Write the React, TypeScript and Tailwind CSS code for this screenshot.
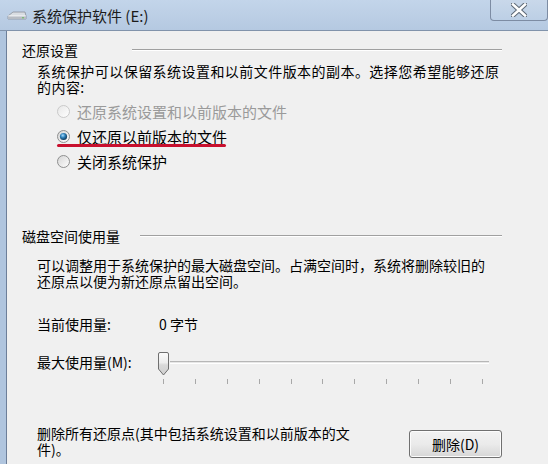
import React from "react";

const font = { fontFamily: '"Noto Sans CJK SC", "Noto Sans", sans-serif' };

const DriveIcon = () => (
  <svg width="20" height="12" viewBox="0 0 20 12">
    <path d="M1 6 L6 2 L18 2 L19 6 L19 9 L1 9 Z" fill="#d9dde2" stroke="#8a9099" strokeWidth="0.8" />
    <path d="M1 6 L19 6" stroke="#f7f8f9" strokeWidth="1" />
    <rect x="1" y="6.5" width="18" height="2.5" fill="#b7bcc3" />
    <circle cx="16" cy="7.7" r="0.8" fill="#5dbb4a" />
  </svg>
);

const CloseGlyph = () => (
  <svg width="16" height="14" viewBox="0 0 16 14">
    <path d="M2 1.5 L14 12.5 M14 1.5 L2 12.5" stroke="#5d6875" strokeWidth="4.6" strokeLinecap="square" />
    <path d="M2 1.5 L14 12.5 M14 1.5 L2 12.5" stroke="#ffffff" strokeWidth="2.6" strokeLinecap="square" />
  </svg>
);

const Radio = ({ id, checked, disabled }: { id: string; checked?: boolean; disabled?: boolean }) => (
  <svg width="13" height="13" viewBox="0 0 13 13" className="shrink-0">
    <defs>
      <linearGradient id={`bg-${id}`} x1="0" y1="0" x2="1" y2="1">
        <stop offset="0" stopColor={disabled ? "#e6e6e6" : "#d4d4d4"} />
        <stop offset="1" stopColor="#ffffff" />
      </linearGradient>
      <radialGradient id={`dot-${id}`} cx="0.4" cy="0.35" r="0.7">
        <stop offset="0" stopColor="#a6dcff" />
        <stop offset="0.45" stopColor="#2d7fb8" />
        <stop offset="1" stopColor="#0b2f4d" />
      </radialGradient>
    </defs>
    <circle cx="6.5" cy="6.5" r="6" fill={`url(#bg-${id})`} stroke={disabled ? "#c9c9c9" : "#8e8f8f"} strokeWidth="1" />
    {checked && <circle cx="6.5" cy="6.5" r="3.6" fill={`url(#dot-${id})`} />}
  </svg>
);

const GroupHeader = ({ label, labelWidth }: { label: string; labelWidth: string }) => (
  <div className="flex items-center h-[16px] pr-[46px]">
    <div className={`${labelWidth} shrink-0 text-[14px] leading-[16px] text-black`}>{label}</div>
    <div className="flex-1 h-[2px] border-t border-[#a0a0a0] border-b-white" style={{ borderBottomWidth: 1 }} />
  </div>
);

const Thumb = () => (
  <svg width="13" height="24" viewBox="0 0 13 24" className="shrink-0">
    <defs>
      <linearGradient id="thumb" x1="0" y1="0" x2="0" y2="1">
        <stop offset="0" stopColor="#fbfbfb" />
        <stop offset="0.45" stopColor="#ededed" />
        <stop offset="0.55" stopColor="#d9d9d9" />
        <stop offset="1" stopColor="#cfcfcf" />
      </linearGradient>
    </defs>
    <path d="M1.5 2 Q1.5 0.5 3 0.5 L10 0.5 Q11.5 0.5 11.5 2 L11.5 17 L6.5 23 L1.5 17 Z" fill="url(#thumb)" stroke="#6f6f6f" strokeWidth="1" />
  </svg>
);

const ticks = [0, 1, 2, 3, 4, 5, 6, 7, 8, 9, 10];

export default function App() {
  return (
    <div className="w-[548px] h-[464px] overflow-hidden flex flex-col bg-[#b4c8e0]" style={font}>
      {/* TITLE BAR */}
      <div className="h-[31px] shrink-0 flex items-start bg-gradient-to-b from-[#c3d5ea] to-[#b5c9e1] border-b border-[#8193ab]">
        <div className="flex items-center h-[31px] pl-[7px] gap-[5px]">
          <DriveIcon />
          <span className="text-[15px] leading-[16px] text-[#1b1b1b]">系统保护软件 (E:)</span>
        </div>
        <div className="ml-auto w-[58px] h-[21px] flex items-center justify-center rounded-b-[4px] border border-t-0 border-[#7d8ca3] bg-gradient-to-b from-[#c9d8ea] to-[#bccfe5]">
          <CloseGlyph />
        </div>
      </div>

      {/* BODY */}
      <div className="flex flex-1">
        <div className="w-[7px] shrink-0 bg-[#b0c5de] border-r border-[#6d7f99]" />
        <div className="relative flex-1 bg-[#f0f0f0] pl-[15px] flex flex-col text-black">
          <div className="mt-[11px]">
            <GroupHeader label="还原设置" labelWidth="w-[110px]" />
          </div>

          <div className="mt-[5px] pl-[15px] text-[14px] leading-[16px] tracking-[0.45px]">
            <div>系统保护可以保留系统设置和以前文件版本的副本。选择您希望能够还原</div>
            <div>的内容:</div>
          </div>

          <div className="mt-[4px] pl-[35px] flex flex-col text-[15px] leading-[16px]">
            <div className="h-[25px] flex items-center gap-[7px] text-[#9a9a9a]">
              <Radio id="r1" disabled />
              <span>还原系统设置和以前版本的文件</span>
            </div>
            <div className="h-[25px] flex items-center gap-[7px]">
              <Radio id="r2" checked />
              <span>仅还原以前版本的文件</span>
            </div>
            <div className="h-[25px] flex items-center gap-[7px]">
              <Radio id="r3" />
              <span>关闭系统保护</span>
            </div>
          </div>

          {/* red annotation underline */}
          <div className="absolute left-[50px] top-[113px] w-[169px] h-[3px] bg-[#c8102e] rounded-full" />

          <div className="mt-[54px]">
            <GroupHeader label="磁盘空间使用量" labelWidth="w-[118px]" />
          </div>

          <div className="mt-[13px] pl-[15px] text-[14px] leading-[16px]">
            <div>可以调整用于系统保护的最大磁盘空间。占满空间时，系统将删除较旧的</div>
            <div>还原点以便为新还原点留出空间。</div>
          </div>

          <div className="mt-[27px] pl-[15px] flex text-[14px] leading-[16px]">
            <span className="w-[122px]">当前使用量:</span>
            <span>0 字节</span>
          </div>

          <div className="mt-[22px] pl-[15px] flex items-start h-[40px] text-[14px] leading-[16px]">
            <span className="w-[120px] shrink-0">最大使用量(M):</span>
            <div className="w-[332px] flex flex-col -mt-[2px]">
              <div className="flex items-start h-[24px]">
                <Thumb />
                <div className="flex-1 mt-[9px] h-[3px] border-t border-[#b7b7b7] bg-[#e7e7e7] border-b border-b-white" />
              </div>
              <div className="flex justify-between pl-[6px] pr-[6px] mt-[3px]">
                {ticks.map((t) => (
                  <div key={t} className="w-[1px] h-[5px] bg-[#a8a8a8]" />
                ))}
              </div>
            </div>
          </div>

          <div className="mt-[31px] pl-[15px] pr-[46px] flex items-start text-[14px] leading-[16px]">
            <div>
              <div>删除所有还原点(其中包括系统设置和以前版本的文</div>
              <div>件)。</div>
            </div>
            <button className="ml-auto mt-[5px] w-[93px] h-[28px] rounded-[3px] border border-[#707070] bg-gradient-to-b from-[#f2f2f2] via-[#ebebeb] to-[#d6d6d6] text-[14px] leading-[16px] text-black shadow-[inset_0_0_0_1px_#fcfcfc]">
              删除(D)
            </button>
          </div>
        </div>
      </div>
    </div>
  );
}
